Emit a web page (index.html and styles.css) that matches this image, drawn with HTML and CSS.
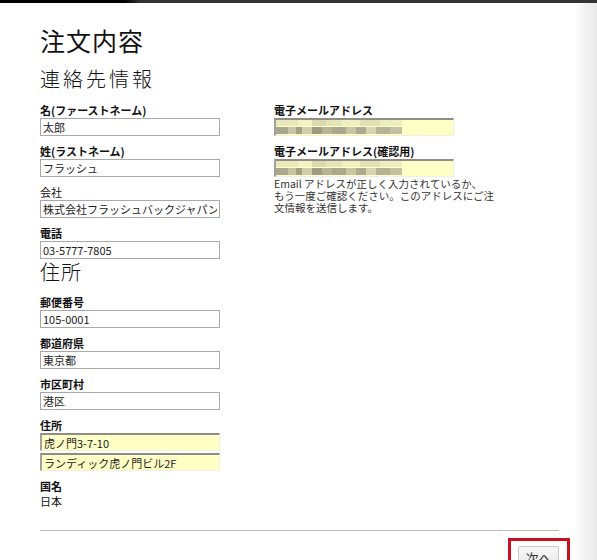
FILE: index.html
```html
<!DOCTYPE html>
<html>
<head>
  <meta charset="utf-8">
  <title>注文内容</title>
  <link rel="stylesheet" href="styles.css">
</head>
<body>
  <div class="topbar"></div>

  <div class="order">
    <h1>注文内容</h1>
    <h2 class="section-title">連絡先情報</h2>

    <div class="columns">
      <div class="col">
        <div class="field">
          <label>名(ファーストネーム)</label>
          <input type="text" value="太郎">
        </div>
        <div class="field">
          <label>姓(ラストネーム)</label>
          <input type="text" value="フラッシュ">
        </div>
        <div class="field">
          <label class="plain">会社</label>
          <input type="text" value="株式会社フラッシュバックジャパン">
        </div>
        <div class="field last">
          <label>電話</label>
          <input type="text" value="03-5777-7805">
        </div>

        <h2 class="section-title address">住所</h2>

        <div class="field">
          <label>郵便番号</label>
          <input type="text" value="105-0001">
        </div>
        <div class="field">
          <label>都道府県</label>
          <input type="text" value="東京都">
        </div>
        <div class="field">
          <label>市区町村</label>
          <input type="text" value="港区">
        </div>
        <div class="field">
          <label>住所</label>
          <input type="text" class="required" value="虎ノ門3-7-10">
          <input type="text" class="required second" value="ランディック虎ノ門ビル2F">
        </div>
        <div class="field">
          <label>国名</label>
          <div class="static">日本</div>
        </div>
      </div>

      <div class="col">
        <div class="field">
          <label>電子メールアドレス</label>
          <input type="text" class="required blurred" value="">
        </div>
        <div class="field">
          <label>電子メールアドレス(確認用)</label>
          <input type="text" class="required blurred" value="">
          <p class="hint">Email アドレスが正しく入力されているか、<br>もう一度ご確認ください。このアドレスにご注<br>文情報を送信します。</p>
        </div>
      </div>
    </div>

    <div class="footer">
      <div class="next-wrap">
        <button class="next">次へ</button>
      </div>
    </div>
  </div>
</body>
</html>
```

FILE: styles.css
```css
* {
  margin: 0;
  padding: 0;
  box-sizing: border-box;
}

body {
  font-family: "Noto Sans CJK JP", "Liberation Sans", sans-serif;
  color: #111;
  height: 560px;
  overflow: hidden;
  background: linear-gradient(to right, #fff 574px, #f3f3f3 584px, #e9e9e9 597px);
}

.topbar {
  height: 3px;
  background: linear-gradient(to right, #000 0, #000 125px, #333 140px, #333 100%);
}

.order {
  margin-left: 40px;
  width: 519px;
  padding-top: 22px;
}

h1 {
  font-size: 25px;
  font-weight: 400;
  line-height: 30px;
  margin-bottom: 11px;
  letter-spacing: 1px;
}

.section-title {
  font-size: 20px;
  font-weight: 300;
  line-height: 26px;
  letter-spacing: 3px;
  margin-bottom: 11px;
}

.section-title.address {
  letter-spacing: 1px;
  margin-bottom: 10px;
}

.columns {
  display: grid;
  grid-template-columns: 180px 180px;
  column-gap: 54px;
}

.field {
  margin-bottom: 8px;
}

.field.last {
  margin-bottom: 0;
}

.field label {
  display: block;
  font-size: 11px;
  font-weight: 700;
  line-height: 14px;
  margin-bottom: 1px;
}

.field label.plain {
  font-weight: 400;
}

.field input {
  display: block;
  width: 180px;
  height: 18px;
  border: 1px solid #a9a9a9;
  background: #fff;
  font-family: "Noto Sans CJK JP", "Liberation Sans", sans-serif;
  font-size: 11px;
  color: #222;
  padding: 0 2px;
  outline: none;
}

.field input.required {
  background-color: #ffffc6;
  border-top: 2px solid #8e8e86;
  border-left: 2px solid #a2a29a;
  border-right: 1px solid #f0f0dc;
  border-bottom: 1px solid #f0f0dc;
}

.field input.second {
  margin-top: 2px;
}

.field input.blurred {
  background-image:
    linear-gradient(to right,
      #a9a78e 0, #a9a78e 12px, #c6c4a2 12px, #c6c4a2 20px,
      #a0a086 20px, #a0a086 26px, #d0cfaa 26px, #d0cfaa 36px,
      #9d9c82 36px, #9d9c82 46px, #b5b497 46px, #b5b497 56px,
      #a9a88d 56px, #a9a88d 70px, #c7c6a5 70px, #c7c6a5 80px,
      #acab90 80px, #acab90 90px, #d6d5b0 90px, #d6d5b0 100px,
      #b4b398 100px, #b4b398 114px, #c2c1a2 114px, #c2c1a2 126px),
    linear-gradient(to right,
      #e9e8ba 0, #e9e8ba 22px, #f3f2c2 22px, #f3f2c2 36px,
      #dcdbb0 36px, #dcdbb0 50px, #e6e5b8 50px, #e6e5b8 66px,
      #f0efc0 66px, #f0efc0 84px, #e2e1b5 84px, #e2e1b5 104px,
      #eeedbf 104px, #eeedbf 126px);
  background-repeat: no-repeat;
  background-size: 126px 7px, 126px 6px;
  background-position: 0 7px, 0 0;
}

.hint {
  font-size: 10.5px;
  line-height: 12px;
  color: #333;
  margin-top: 1px;
  white-space: nowrap;
}

.static {
  font-size: 11px;
  line-height: 14px;
}

.footer {
  border-top: 1px solid #bdbdbd;
  margin-top: 14px;
  padding-top: 13px;
  display: flex;
  justify-content: flex-end;
}

.next-wrap {
  position: relative;
}

.next-wrap::after {
  content: "";
  position: absolute;
  top: -6px;
  left: -10px;
  right: -11px;
  bottom: -12px;
  border: 3px solid #c8101e;
}

.next {
  width: 41px;
  height: 24px;
  border: 1px solid #c9c9c9;
  border-radius: 2px;
  background: linear-gradient(#f8f8f8, #e6e6e6);
  font-family: "Noto Sans CJK JP", "Liberation Sans", sans-serif;
  font-size: 13px;
  color: #333;
}
```
